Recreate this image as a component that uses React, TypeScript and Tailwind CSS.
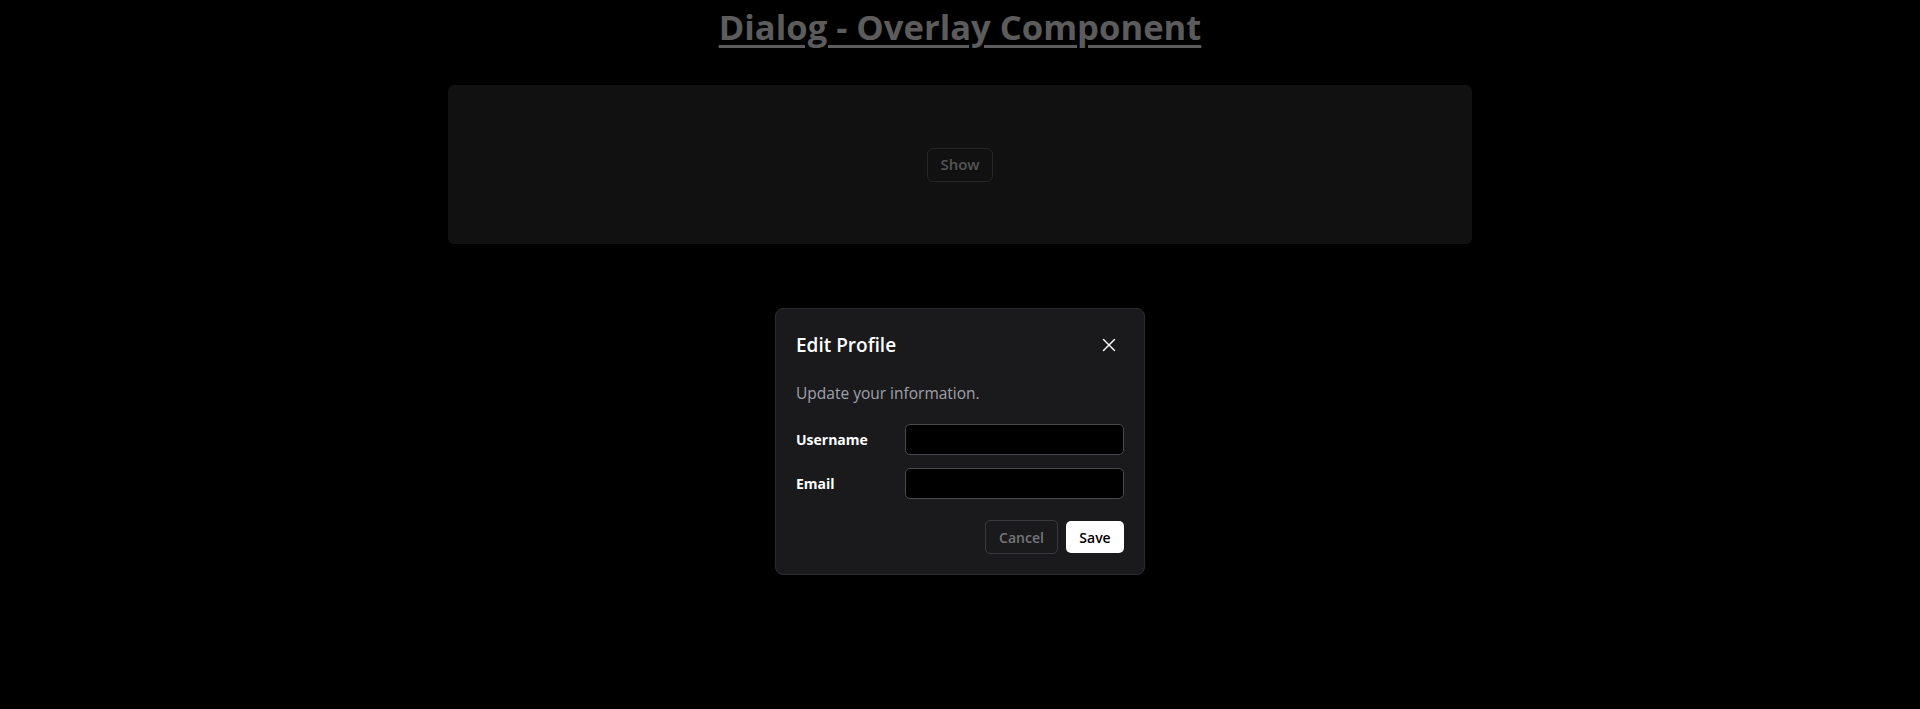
import { X } from 'lucide-react';

export default function App() {
  return (
    <div className="relative min-h-[709px] w-full bg-black font-['Open_Sans','Noto_Sans',sans-serif]">
      <h1 className="pt-[5px] text-center text-[34.6px] font-bold leading-[44px] text-[#5c5c5c] underline decoration-[3px] underline-offset-[5px]">
        Dialog - Overlay Component
      </h1>

      <div className="mx-auto mt-[36px] flex h-[159px] w-[1024px] items-center justify-center rounded-md bg-[#111111]">
        <button
          type="button"
          className="h-[34px] w-[66px] rounded-md border border-[#262626] text-[15px] font-semibold text-[#555555]"
        >
          Show
        </button>
      </div>

      {/* overlay dialog */}
      <div className="absolute inset-x-0 top-[308px] flex justify-center">
        <div className="w-[370px] rounded-lg border border-[#2c2c30] bg-[#1a1a1c] px-5 pb-5 pt-[21px] text-white">
          <div className="flex items-center justify-between">
            <h2 className="text-[19px] font-semibold leading-[30px]">Edit Profile</h2>
            <button type="button" className="mr-[4px] text-white">
              <X size={22} strokeWidth={1.6} />
            </button>
          </div>
          <p className="mt-[22px] text-[15.5px] leading-[22px] text-[#a1a1aa]">Update your information.</p>

          <div className="mt-[20px] flex flex-col gap-[13px]">
            <label className="flex items-center justify-between">
              <span className="text-[14px] font-bold">Username</span>
              <input className="h-[31px] w-[219px] rounded-[5px] border border-[#4a4a4e] bg-black px-2 text-sm text-white outline-none" />
            </label>
            <label className="flex items-center justify-between">
              <span className="text-[14px] font-bold">Email</span>
              <input className="h-[31px] w-[219px] rounded-[5px] border border-[#4a4a4e] bg-black px-2 text-sm text-white outline-none" />
            </label>
          </div>

          <div className="mt-[21px] flex justify-end gap-2">
            <button
              type="button"
              className="h-[34px] w-[73px] rounded-[5px] border border-[#3a3a3e] text-[14px] font-semibold text-[#76767a]"
            >
              Cancel
            </button>
            <button
              type="button"
              className="mt-px h-[32px] w-[58px] rounded-[5px] bg-white text-[14px] font-semibold text-black"
            >
              Save
            </button>
          </div>
        </div>
      </div>
    </div>
  );
}
